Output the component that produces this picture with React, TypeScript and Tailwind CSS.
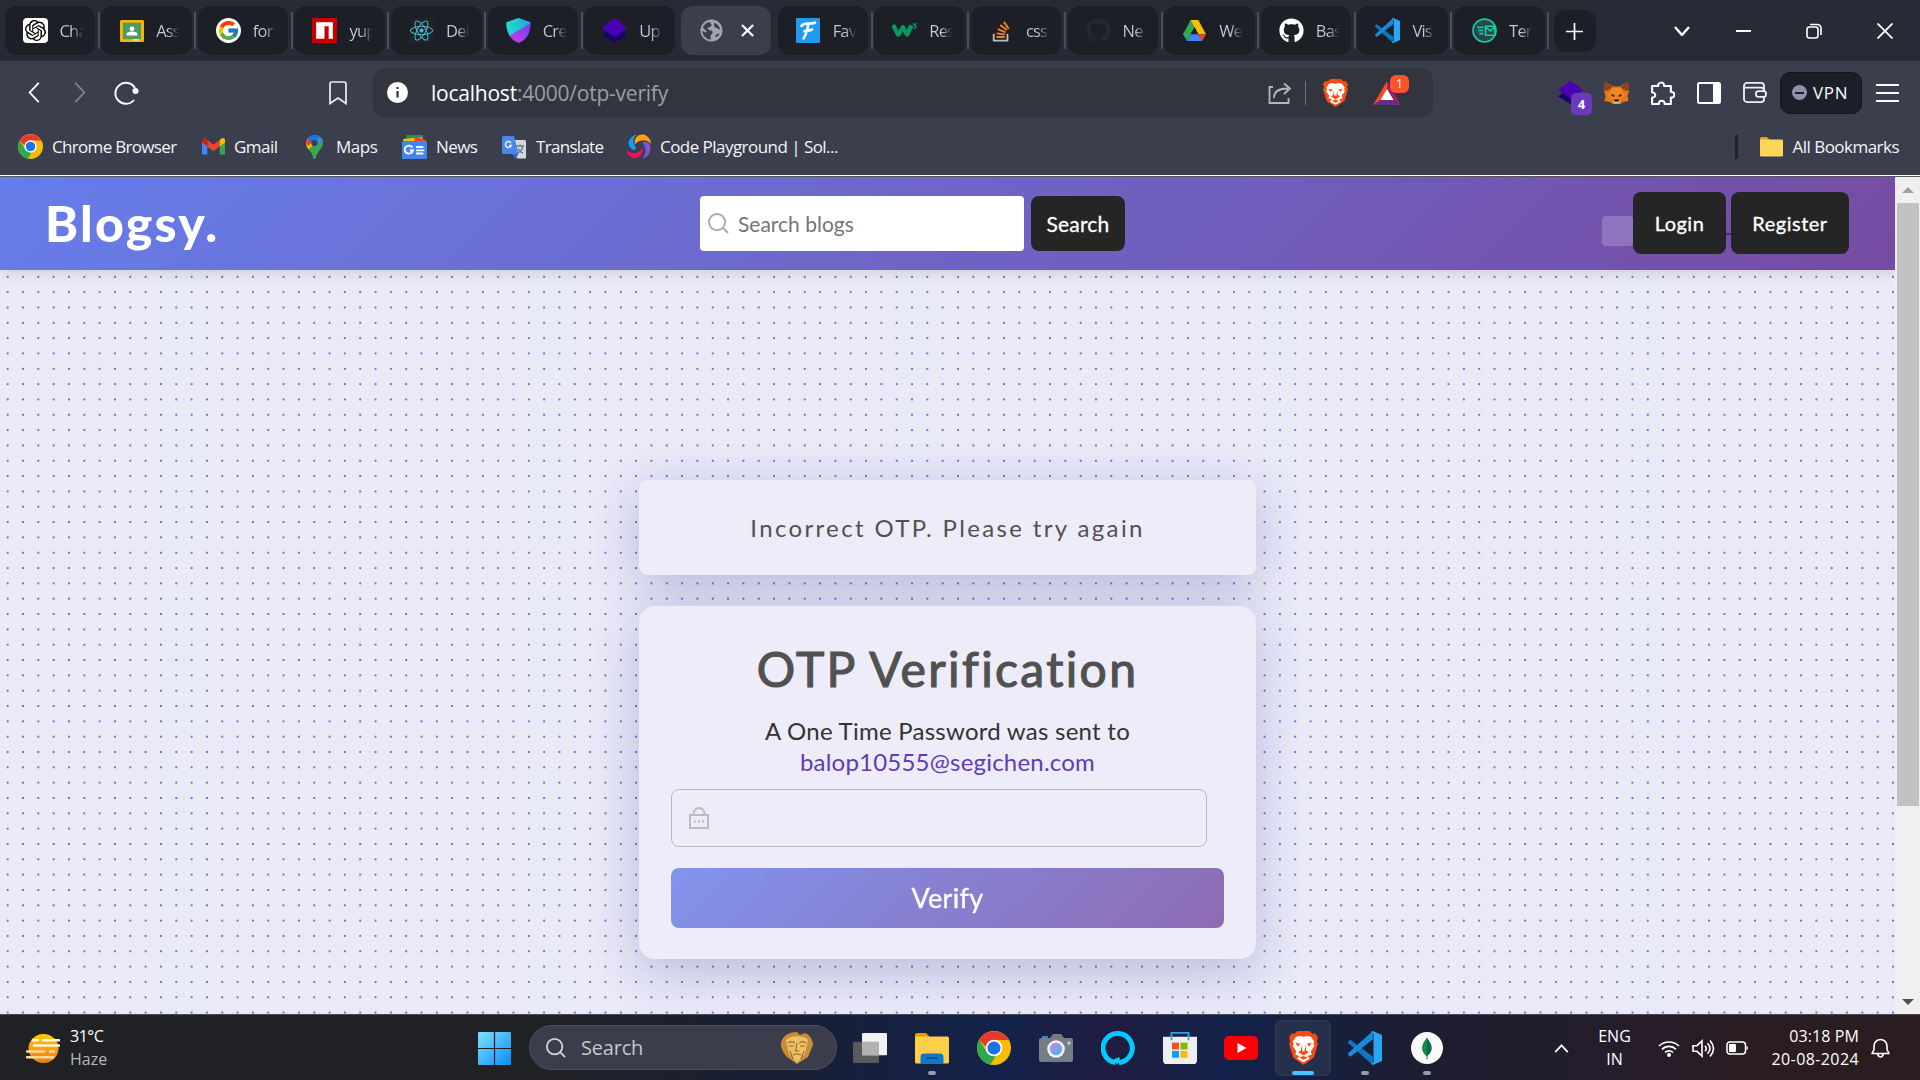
import React from "react";
import { FaReact, FaGithub, FaStackOverflow } from "react-icons/fa";
import { SiOpenai } from "react-icons/si";
import { FcGoogle } from "react-icons/fc";

type IconProps = { className?: string };

const svg = (viewBox: string, body: React.ReactNode) =>
  function Icon({ className = "h-6 w-6" }: IconProps) {
    return (
      <svg viewBox={viewBox} className={className} fill="none" preserveAspectRatio="none" aria-hidden="true">
        {body}
      </svg>
    );
  };

const Classroom = svg("0 0 24 24", <>
  <rect width="24" height="24" rx="1.5" fill="#f4b400" />
  <rect x="3" y="3" width="18" height="18" fill="#4a9c64" />
  <circle cx="12" cy="9.5" r="2.4" fill="#fff" />
  <path d="M6.500 17v-1.500c0-2 3-3 5.500-3s5.500 1 5.500 3V17z" fill="#fff" />
  <path d="M13 21h6v1.500h-6z" fill="#f1f1f1" />
</>);
const Npm = svg("0 0 24 24", <>
  <rect width="24" height="24" fill="#c60000" />
  <path d="M4 4h16v16h-4V8h-4v12H4z" fill="#fff" />
</>);
const Shield = svg("0 0 24 24", <>
  <defs>
    <linearGradient id="shB" x1="1" y1="0" x2="0" y2="1"><stop stopColor="#5b3ff0" /><stop offset="1" stopColor="#e03bea" /></linearGradient>
    <linearGradient id="shC" x1="0" y1="0" x2="1" y2="0"><stop stopColor="#20e0c8" /><stop offset="1" stopColor="#1fa5dd" /></linearGradient>
  </defs>
  <path d="M12 0l11.500 4c.5 7-1.500 16-11.500 20C2 20 0 11 .5 4z" fill="url(#shB)" />
  <path d="M12 0l11.500 4v1L3.500 17C1 13 .2 8 .5 4z" fill="url(#shC)" />
</>);
const Layers = svg("0 0 24 24", <>
  <path d="M12 8l12 8-12 8-12-8z" fill="#1b0068" />
  <path d="M12 0l12 9.200-12 9.200L0 9.200z" fill="#4a00b4" />
</>);
const Globe = svg("0 0 24 24", <>
  <circle cx="12" cy="12" r="11.500" fill="#a0a5b0" />
  <path d="M3 9c1-3 4-6 8-6-1 2 2 2 1 4s-4 1-4 3 4 1 5 3-2 3-2 5 1 3 0 3.500C6 21 2.500 17 2.500 12.500l4 1.500c1-1 0-2-1-2.500zM15 4c3 1 5.500 4 6 7-2 0-3-2-4.500-2S14 6 15 4zM16 19c0-3 2-4 4.500-3.500-1 2-2.500 3.300-4.500 3.500z" fill="#3b3e4d" />
</>);
const Fav = svg("0 0 24 24", <>
  <rect width="24" height="24" rx="1" fill="#1e9bf0" />
  <path d="M5.500 7.500C9 3.500 13 6.500 19 4.500M12.500 6C11 11 10.500 16 7.500 19.500M8.500 12.500c3 0 5-.3 7.500-1.500" stroke="#fff" strokeWidth="2.600" strokeLinecap="round" />
</>);
const W3 = svg("0 0 24 24", <>
  <path d="M1 5.500l5 11.500 4.500-9 4 9 4-11" stroke="#049b62" strokeWidth="4.200" strokeLinejoin="round" />
  <path d="M20 4.500h3l-1.500 2c2.500.3 2 3.300-.5 3-.6 0-1-.3-1.300-.7" stroke="#049b62" strokeWidth="1.200" />
</>);
const Drive = svg("0 0 24 22", <>
  <path d="M8 0h8l-4 7.500L4 22 0 15z" fill="#34a853" />
  <path d="M8 0h8l-4 7z" fill="#188038" />
  <path d="M8 0h8l8 15h-8z" fill="#fbbc04" />
  <path d="M24 15l-4 7-4-7z" fill="#ea4335" />
  <path d="M4 22l4-7h8l4 7z" fill="#4285f4" />
  <path d="M8.500 14h7L12 7.500z" fill="#1d1f27" />
</>);
const VsCode = svg("0 0 24 24", <>
  <path d="M0 7.300l1.700-1.200L17.500 18v6L.3 8.700z" fill="#0a78c4" />
  <path d="M0 16.700l1.700 1.500L17.500 6V0L.3 15.500z" fill="#1a8ad6" />
  <path d="M17.500 0L24 2.800v18.400L17.500 24l-1.300-.7L18 22V2L16.200.7z" fill="#2aa5f3" />
</>);
const TempMail = svg("0 0 24 24", <>
  <circle cx="12" cy="12" r="11" fill="#2d4550" stroke="#14cf9f" strokeWidth="1.600" />
  <path d="M5 9h6M6 12h5M7 15h4M13 8h9v8.500h-9zM13 8.500l4.500 4 4.500-4" stroke="#14cf9f" strokeWidth="1.500" />
</>);
const Brave = svg("0 0 28 32", <>
  <path d="M8 0h12l2.500 2.700 3-.3L28 6l-1.200 3.500L28 12l-4 13-10 7L4 25 0 12l1.200-2.500L0 6l2.500-3.600 3 .3z" fill="#fb4a13" />
  <path d="M14 5.500l4-.8 3.500 1 3 4.300-1 1.500 1 2.500-3.500 5 1 3-4 1.500L20 26l-6 3.500L8 26l2-2.500L6 22l1-3-3.500-5 1-2.500-1-1.500 3-4.300 3.500-1z" fill="#fff" />
  <path d="M6 11l5 1-2.500 2.500zM22 11l-5 1 2.500 2.500zM12 13l-.5 5-2.500 2 5 3 5-3-2.500-2-.5-5-1 6h-2zM10 25l4-1.500 4 1.500-4 2z" fill="#fb4a13" />
</>);
const Bat = svg("0 0 28 24", <>
  <path d="M14 0v9L8 19l-8 5z" fill="#ff4724" />
  <path d="M14 0l14 24-8-5-6-10z" fill="#9e1f63" />
  <path d="M0 24l8-5h12l8 5z" fill="#662d91" />
  <path d="M14 8l6.500 11h-13z" fill="#fff" />
</>);
const Fox = svg("0 0 24 22", <>
  <path d="M1 0l8.500 4.500h5L23 0l1 9-1.500 5 1 5-5 1-3 2h-7l-3-2-5-1 1-5L0 9z" fill="#e4761b" />
  <path d="M1 0l7.500 4.500L5 8 1 9 0 7zM23 0l-7.500 4.500L19 8l4 1 1-2z" fill="#8a4420" />
  <path d="M8 6h8l4 8-4 3H8l-4-3z" fill="#f6851b" />
  <path d="M7 12l3 1v2l-3-1zM17 12l-3 1v2l3-1z" fill="#33312f" />
  <path d="M8.500 18h7l-1 3.500h-5z" fill="#d7c1b3" /><path d="M10 17.500h4l.5 2h-5z" fill="#161616" />
</>);
const Puzzle = svg("0 0 24 24", <path d="M2 5h6c-1.300-4 6-5 5.500 0H20v6c4.500-1 4.500 6.500 0 5.500V23h-6c.5-4.500-6-4.500-5.500 0H2v-6.500c4 .5 4-5.500 0-5z" stroke="#fff" strokeWidth="2" strokeLinejoin="round" />);
const Wallet = svg("0 0 24 22", <>
  <rect x="1" y="1" width="20" height="20" rx="3" stroke="#f1f1f4" strokeWidth="1.800" />
  <path d="M2 6h16q3 0 3 3" stroke="#f1f1f4" strokeWidth="1.800" />
  <rect x="13" y="9.500" width="10" height="6" rx="2.500" fill="#3b3e4d" stroke="#f1f1f4" strokeWidth="1.800" />
</>);
const Share = svg("0 0 24 24", <path d="M5 6H1.500v16h19v-5M6 17c0-7 5-9.500 14-9.500M16 2.500l6 5-6 5.500" stroke="#b6b8be" strokeWidth="1.800" />);
const Chrome = svg("0 0 24 24", <>
  <circle cx="12" cy="12" r="12" fill="#fbbc05" />
  <path d="M1.600 6L7 15l6 3-3.500 5.700A12 12 0 0 1 1.600 6z" fill="#2da94f" />
  <path d="M1.600 6A12 12 0 0 1 22.400 6.300H12L7 12z" fill="#e33b2e" />
  <circle cx="12" cy="12" r="5.900" fill="#fff" /><circle cx="12" cy="12" r="4.600" fill="#1a73e8" />
</>);
const Gmail = svg("0 0 24 18", <>
  <path d="M0 3v14.500h5.500V7z" fill="#4285f4" /><path d="M24 3v14.500h-5.500V7z" fill="#34a853" />
  <path d="M5.500 2l6.500 5 6.500-5v7L12 14 5.500 9z" fill="#ea4335" />
  <path d="M0 2.500C0 0 2.500-.5 4 .8L5.500 2v7L0 4.800z" fill="#c5221f" /><path d="M24 2.500C24 0 21.500-.5 20 .8L18.500 2v7L24 4.800z" fill="#fbbc04" />
</>);
const Maps = svg("0 0 16 24", <>
  <path d="M8 0a8 8 0 0 1 8 8c0 6-6 8-7 16H7C6 16 0 14 0 8a8 8 0 0 1 8-8z" fill="#34a853" />
  <path d="M1.500 3.500L8 8l-5.500 6.500C-1 10 0 6 1.500 3.500z" fill="#fbbc04" />
  <path d="M1.500 3.500L6 7l-4 4C-.5 8 0 5.500 1.500 3.500z" fill="#ea4335" />
  <path d="M1.700 3.300A8 8 0 0 1 13 1.800L6 9z" fill="#1a73e8" />
  <path d="M13 1.800c1.500 1.200 2.500 2.700 2.900 4.500L9 11z" fill="#4285f4" />
  <circle cx="8" cy="8" r="3" fill="#3b3e4d" />
</>);
const News = svg("0 0 24 24", <>
  <path d="M4 0h16v8H4z" fill="#0c9d58" /><path d="M1 4l18-2 3 6H1z" fill="#fbbc04" /><path d="M12 1l11 4v3H12z" fill="#ea4335" />
  <rect y="6" width="24" height="18" rx="1.500" fill="#4285f4" />
  <path d="M10 12.500A4 4 0 1 0 10.500 15.500H7.500M13.500 12h7M13.500 15.300h8M13.500 18.500h7" stroke="#fff" strokeWidth="1.800" />
</>);
const Translate = svg("0 0 24 24", <>
  <path d="M10 5h12.500q1.500 0 1.500 1.500V22q0 1.500-1.500 1.500H15z" fill="#d5d8dc" />
  <path d="M14 11h8M18 9.500V11M21 11c-1 4-3 6-5.500 7M16 13.500c1 2.500 3 4 5 4.500" stroke="#607d8b" strokeWidth="1.300" />
  <path d="M1.500 1H12l4.500 18H2Q0 19 0 17.500v-15Q0 1 1.500 1z" fill="#4a86e8" /><path d="M10 19h6.500L13 24z" fill="#3367d6" />
  <path d="M9 8A3 3 0 1 0 9.300 10.500H7" stroke="#e8efff" strokeWidth="1.500" />
</>);
const Solo = svg("0 0 24 24", <>
  <path d="M8 15.500C2 14 0 6 7.500 1.500c1-.6 2-.9 3-1C6 4 6 9 10 13z" fill="#149df2" />
  <path d="M8.500 10C7 3 14-2 20 2c2.500 2 4 4.500 4 7.500C20 4.500 13 5 8.500 10z" fill="#ffa20e" />
  <path d="M15.500 8c6-2.500 9.500 3 7.500 9-1.200 3.500-4 6-7.500 7C20 19 19.500 12 15.500 8z" fill="#8053dd" />
  <path d="M16 13c1 8-6 13-12 8.500-2-1.500-3-3.500-3.500-5.500C6 19.500 13 19.500 16 13z" fill="#f70f5b" />
</>);
const Folder = svg("0 0 24 24", <>
  <path d="M0 2Q0 0 2 0h5l3 3v3H0z" fill="#e0a31e" /><rect y="3" width="24" height="20.500" rx="1.500" fill="#fdd65b" />
</>);
const Haze = svg("0 0 34 30", <>
  <defs><linearGradient id="hz" x1="0" y1="0" x2="0" y2="1"><stop stopColor="#ffc90a" /><stop offset="1" stopColor="#f47a10" /></linearGradient></defs>
  <circle cx="17.500" cy="15" r="15" fill="url(#hz)" />
  <path d="M7 6.500h5M17 6.500h16M8 12h25" stroke="#fff6e0" strokeWidth="2.600" strokeLinecap="round" />
  <path d="M1 18h17M24 18h4M1 24h26" stroke="#ffdba0" strokeWidth="2.600" strokeLinecap="round" />
</>);
const Windows = svg("0 0 32 32", <>
  <defs><linearGradient id="wn" x1="0" y1="0" x2="1" y2="1"><stop stopColor="#7fe0ff" /><stop offset="1" stopColor="#0a8df5" /></linearGradient></defs>
  <path d="M0 1q0-1 1-1h14.400v15.400H0zM16.600 0H31q1 0 1 1v14.400H16.600zM0 16.600h15.400V32H1q-1 0-1-1zM16.600 16.600H32V31q0 1-1 1H16.600z" fill="url(#wn)" />
</>);
const Mask = svg("0 0 34 32", <>
  <path d="M2 8C4 3 10 0 17 0l3 3 5-2c5 2 8 7 8 12l-5 12-11 7-10-7C3 20-1 14 2 8z" fill="#c98d35" />
  <path d="M6 8c4-5 18-5 22 0l-3 14-8 9-8-9z" fill="#ecc06a" />
  <path d="M8 11c3-2 5-2 7 0M19 11c3-2 5-2 7 0M9 14h5M20 14h5M17 11l-1.500 8h3.500M13 23c3-1.500 5-1.500 8 0M10 19l3 8M24 19l-3 8" stroke="#9a6824" strokeWidth="1.100" />
</>);
const TaskView = svg("0 0 34 32", <>
  <rect y="9" width="26" height="22" rx="1" fill="#5a5a5a" /><rect x="9" width="25" height="23" rx="1" fill="#f1f1f1" /><rect x="9" y="9" width="17" height="14" fill="#b2b2b2" />
</>);
const Explorer = svg("0 0 34 31", <>
  <path d="M0 2Q0 0 2 0h9l3 3v5H0z" fill="#e0a000" /><rect y="3.500" width="34" height="27" rx="1.500" fill="#fecf47" />
  <path d="M5.500 31v-7q0-3.500 3.500-3.500h16q3.500 0 3.500 3.500v7z" fill="#0f78c8" /><path d="M11 25h12" stroke="#0b4e8a" strokeWidth="1.500" />
</>);
const Camera = svg("0 0 34 28", <>
  <defs><linearGradient id="cm" x1="0" y1="0" x2="1" y2="1"><stop stopColor="#c58be8" /><stop offset="1" stopColor="#41b6ee" /></linearGradient></defs>
  <rect x="3" y="2" width="6" height="4" fill="#2b8bbd" /><path d="M2 4h9l3-4h8l3 4h7q2 0 2 2v20q0 2-2 2H2q-2 0-2-2V6q0-2 2-2z" fill="#757d86" />
  <circle cx="17" cy="15" r="8.800" fill="#f0f2f5" /><circle cx="17" cy="15" r="6.200" fill="url(#cm)" /><path d="M28 9h4M30 7v4" stroke="#d8dde2" strokeWidth="1" />
</>);
const Alexa = svg("0 0 34 34", <path d="M14.500 31.500A14.600 14.600 0 1 1 18 31.600M14.500 31.500Q17 30 16 27" stroke="#00caff" strokeWidth="5" />);
const Store = svg("0 0 34 34", <>
  <path d="M8.500 8V1h17v7" stroke="#2ba3e0" strokeWidth="1.800" />
  <path d="M0 5h34v24q0 4-4 4H4q-4 0-4-4z" fill="#eeeeee" />
  <path d="M9 11h7v7H9z" fill="#f25022" /><path d="M17.500 11h7v7h-7z" fill="#7fba00" /><path d="M9 19.500h7v7H9z" fill="#00a4ef" /><path d="M17.500 19.500h7v7h-7z" fill="#ffb900" />
  <path d="M8.500 5v3.500M25.500 5v3.500" stroke="#2ba3e0" strokeWidth="1.800" />
</>);
const YouTube = svg("0 0 34 24", <><rect width="34" height="24" rx="5" fill="#fe0000" /><path d="M13.500 7l9 5-9 5z" fill="#fff" /></>);
const Mongo = svg("0 0 34 34", <>
  <circle cx="17" cy="17" r="17" fill="#fafafa" /><path d="M17 6c3 4 5 7 5 11s-2 6-4.500 8.500V29h-1v-3.500C14 23 12 21 12 17s2-7 5-11z" fill="#0b6b4a" /><path d="M17 6c-3 4-5 7-5 11s2 6 4.500 8.500z" fill="#118d4d" />
</>);
const Wifi = svg("0 0 22 17", <>
  <path d="M1 6a14.500 14.500 0 0 1 20 0M4 9.300a10 10 0 0 1 14 0M7 12.500a5.800 5.800 0 0 1 8 0" stroke="#fff" strokeWidth="1.700" /><circle cx="11" cy="15" r="2" fill="#fff" />
</>);
const Volume = svg("0 0 23 20", <path d="M1 7v6h4l5 5V2L5 7zM13 7q2.500 3 0 6M15.500 4.500q5 5.500 0 11M18 1.500q7 8.500 0 17" stroke="#fff" strokeWidth="1.600" />);
const Battery = svg("0 0 23 14", <>
  <rect x="1" y="1" width="18.500" height="12" rx="3" stroke="#fff" strokeWidth="1.500" /><rect x="3" y="3" width="7" height="8" rx="1" fill="#fff" /><path d="M20.500 4.500q3 2.500 0 5z" fill="#fff" />
</>);
const Bell = svg("0 0 19 20", <path d="M1 15.500h17l-2-4V8a6.500 6.500 0 0 0-13 0v3.500zM6.500 16q1 3 3 3t3-3" stroke="#fff" strokeWidth="1.600" strokeLinejoin="round" />);
const Search = svg("0 0 22 22", <path d="M9.500 1a8.500 8.500 0 1 0 0 17 8.500 8.500 0 0 0 0-17zM15.500 15.500L21 21" stroke="currentColor" strokeWidth="2" />);
const Lock = svg("0 0 20 22", <><path d="M1 8h18v13H1zM4.500 8V6.500a5.500 5.500 0 0 1 11 0V8" stroke="#bdbcbc" strokeWidth="2" /><path d="M5 14.500h2M9 14.500h2M13 14.500h2" stroke="#bdbcbc" strokeWidth="2" /></>);

const tabs: { icon: React.ReactNode; label: string; active?: boolean; sep?: boolean }[] = [
  { icon: <span className="grid h-[25px] w-[25px] place-items-center rounded-[4px] bg-white"><SiOpenai className="h-[21px] w-[21px] text-black" /></span>, label: "Cha", sep: true },
  { icon: <Classroom className="h-[22px] w-6" />, label: "Ass", sep: true },
  { icon: <span className="grid h-[25px] w-[25px] place-items-center rounded-full bg-white"><FcGoogle className="h-[23px] w-[23px]" /></span>, label: "for", sep: true },
  { icon: <Npm className="h-[25px] w-[25px]" />, label: "yup", sep: true },
  { icon: <span className="grid h-[25px] w-[25px] place-items-center bg-[#20232a]"><FaReact className="h-[23px] w-[23px] text-[#53b9d1]" /></span>, label: "Del", sep: true },
  { icon: <Shield className="h-[25px] w-[25px]" />, label: "Cre", sep: true },
  { icon: <Layers className="h-[25px] w-[25px]" />, label: "Up" },
  { icon: <Globe className="h-[23px] w-[23px]" />, label: "", active: true },
  { icon: <Fav className="h-[25px] w-6" />, label: "Fav", sep: true },
  { icon: <W3 className="h-[21px] w-[25px]" />, label: "Res", sep: true },
  { icon: <svg viewBox="0 0 20 24" className="h-[22px] w-[19px]" fill="none"><path d="M1.500 15v7.500h15V15" stroke="#bcbbbb" strokeWidth="2" /><path d="M4.500 18.500h9M4.700 14.500l9 1.500M6 10l8.500 3.500M8.500 5.500l7.500 5.500M12.500 2l5.500 7.500" stroke="#f48024" strokeWidth="2" /></svg>, label: "css", sep: true },
  { icon: <FaGithub className="h-[25px] w-[25px] text-[#24292f]" />, label: "Ne", sep: true },
  { icon: <Drive className="h-[21px] w-[23px]" />, label: "We", sep: true },
  { icon: <FaGithub className="h-[25px] w-[25px] text-white" />, label: "Bas", sep: true },
  { icon: <VsCode className="h-[25px] w-[25px]" />, label: "Vis", sep: true },
  { icon: <TempMail className="h-[25px] w-[25px]" />, label: "Ter", sep: true },
];

function TabStrip() {
  return (
    <div className="flex h-[61px] items-start bg-[#282a36] pl-[4.5px] pt-[6px]">
      {tabs.map((t, i) => (
        <div key={i} className="flex w-[96.65px] shrink-0 items-center">
          <div className={t.active ? "flex h-[49px] w-[90.500px] items-center rounded-[12px] bg-[#3b3e4d] pl-[18px]" : "flex h-[49px] w-[90.500px] items-center rounded-[12px] bg-[#1d1f27] pl-[18px]"}>
            <span className="grid h-[25px] w-[25px] shrink-0 place-items-center">{t.icon}</span>
            {t.active ? (
              <svg viewBox="0 0 14 14" className="ml-[17px] h-[13px] w-[13px]"><path d="M1 1l12 12M13 1L1 13" stroke="#fff" strokeWidth="2.400" /></svg>
            ) : (
              <span className="ml-[12px] w-[24px] overflow-hidden whitespace-nowrap bg-linear-to-r from-[#c9cacd] from-50% to-[#1d1f27] bg-clip-text text-[16.500px] leading-[24px] tracking-[-0.8px] text-transparent">{t.label}</span>
            )}
          </div>
          {t.sep && <span className="ml-[2.500px] h-[37px] w-[2px] bg-[#4b4d57]" />}
        </div>
      ))}
      <div className="ml-[3px] mt-[4px] grid h-[42px] w-[42px] place-items-center rounded-[12px] bg-[#1d1f27]">
        <svg viewBox="0 0 18 18" className="h-[17px] w-[17px]"><path d="M9 0v18M0 9h18" stroke="#fff" strokeWidth="1.800" /></svg>
      </div>
      <div className="ml-auto flex h-[49px] items-center pr-[27px]">
        <svg viewBox="0 0 16 10" className="h-[10px] w-[16px]"><path d="M1 1l7 8 7-8" stroke="#fff" strokeWidth="2.400" fill="none" /></svg>
        <span className="ml-[46px] h-[2px] w-[15px] bg-white" />
        <svg viewBox="0 0 16 16" className="ml-[55px] h-[16px] w-[16px]"><rect x="1" y="4" width="11" height="11" rx="2.500" stroke="#fff" strokeWidth="1.600" fill="none" /><path d="M4 1.500h7q4 0 4 4V12" stroke="#fff" strokeWidth="1.600" fill="none" /></svg>
        <svg viewBox="0 0 16 16" className="ml-[55px] h-[16px] w-[16px]"><path d="M.5.5l15 15M15.500.5l-15 15" stroke="#fff" strokeWidth="1.800" /></svg>
      </div>
    </div>
  );
}

function Toolbar() {
  return (
    <div className="flex h-[63px] items-center bg-[#3b3e4d] pl-[28px] pr-[21px]">
      <svg viewBox="0 0 12 22" className="h-[21px] w-[12px]"><path d="M11 1L1.500 11 11 21" stroke="#fff" strokeWidth="1.900" fill="none" /></svg>
      <svg viewBox="0 0 12 22" className="ml-[34px] h-[21px] w-[12px]"><path d="M1 1l9.500 10L1 21" stroke="#80838d" strokeWidth="1.900" fill="none" /></svg>
      <svg viewBox="0 0 25 24" className="ml-[28px] h-[24px] w-[25px]"><path d="M20 19A10.500 10.500 0 1 1 21 7" stroke="#fff" strokeWidth="1.900" fill="none" /><circle cx="21.500" cy="10" r="3" fill="#fff" /></svg>
      <svg viewBox="0 0 18 24" className="ml-[190px] h-[24px] w-[18px]"><path d="M1 3q0-2 2-2h12q2 0 2 2v19.500L9 17l-8 5.500z" stroke="#eee" strokeWidth="1.700" fill="none" /></svg>
      <div className="ml-[26px] flex h-[49px] w-[1060px] shrink-0 items-center rounded-[12px] bg-[#32353e] pl-[14px] pr-[32px]">
        <svg viewBox="0 0 21 21" className="h-[21px] w-[21px]"><circle cx="10.500" cy="10.500" r="10.500" fill="#fff" /><path d="M10.500 9v6.500M10.500 5v2" stroke="#32353e" strokeWidth="2.200" /></svg>
        <span className="ml-[23px] whitespace-nowrap text-[21px] leading-[28px] tracking-[-0.23px] text-[#9b9da3]"><span className="text-white">localhost</span>:4000/otp-verify</span>
        <Share className="ml-auto h-[24px] w-[24px]" />
        <span className="ml-[13px] h-[24px] w-px bg-[#6e7079]" />
        <Brave className="ml-[17px] h-[28px] w-[25px]" />
        <span className="relative ml-[25px]"><Bat className="h-[24px] w-[28px]" />
          <span className="absolute -top-[6px] left-[17px] grid h-[18px] w-[19px] place-items-center rounded-[6px] bg-[#fb542b] text-[12px] leading-none text-white">1</span>
        </span>
      </div>
      <span className="relative ml-auto"><Layers className="h-[23px] w-[25px]" />
        <span className="absolute left-[13px] top-[12px] grid h-[22px] w-[21px] place-items-center rounded-[5px] bg-[#6b38c0] text-[13px] font-bold leading-none text-white">4</span>
      </span>
      <Fox className="ml-[21px] h-[22px] w-[25px]" />
      <Puzzle className="ml-[21px] h-[24px] w-[25px]" />
      <svg viewBox="0 0 24 22" className="ml-[22px] h-[22px] w-[24px]"><rect x="1" y="1" width="22" height="20" rx="1.500" stroke="#fff" strokeWidth="2" fill="none" /><path d="M16 1h7v20h-7z" fill="#fff" /></svg>
      <Wallet className="ml-[22px] h-[21px] w-[24px]" />
      <div className="ml-[13px] flex h-[42px] w-[82px] items-center rounded-[10px] border border-[#13151c] bg-[#1c1e28] pl-[11px]">
        <span className="grid h-[15px] w-[15px] place-items-center rounded-full bg-[#8f92a8]"><span className="h-[2px] w-[9px] bg-[#1c1e28]" /></span>
        <span className="ml-[6px] text-[17px] leading-[22px] tracking-[0.7px] text-white">VPN</span>
      </div>
      <div className="ml-[14px] flex w-[23px] flex-col gap-[6px]"><span className="h-[2px] bg-white" /><span className="h-[2px] bg-white" /><span className="h-[2px] bg-white" /></div>
    </div>
  );
}

function Bookmarks() {
  return (
    <div className="flex h-[51px] items-center whitespace-nowrap bg-[#3b3e4d] pb-[6px] pl-[18px] text-[17px] leading-[24px] text-[#f4f4f6]">
      <div className="flex w-[184px] items-center gap-[9px]"><Chrome className="h-[25px] w-[25px]" /><span className="tracking-[-0.68px]">Chrome Browser</span></div>
      <div className="flex w-[104px] items-center gap-[9px]"><Gmail className="h-[17px] w-[23px]" /><span className="tracking-[-0.5px]">Gmail</span></div>
      <div className="flex w-[96px] items-center gap-[13px]"><Maps className="h-[24px] w-[17px]" /><span className="tracking-[-0.5px]">Maps</span></div>
      <div className="flex w-[100px] items-center gap-[9px]"><News className="h-[24px] w-[25px]" /><span className="tracking-[-0.55px]">News</span></div>
      <div className="flex w-[124px] items-center gap-[10px]"><Translate className="h-[24px] w-[24px]" /><span className="tracking-[-0.7px]">Translate</span></div>
      <div className="flex items-center gap-[9px]"><Solo className="h-[25px] w-[25px]" /><span className="tracking-[-0.54px]">Code Playground | Sol...</span></div>
      <span className="ml-auto h-[24px] w-[3px] bg-[#1f2028]" />
      <Folder className="ml-[22px] h-[20px] w-[23px]" />
      <span className="ml-[10px] mr-[21px] tracking-[-0.53px]">All Bookmarks</span>
    </div>
  );
}

function SiteHeader() {
  return (
    <header className="flex h-[93px] shrink-0 items-center bg-[linear-gradient(135deg,#667eea_0%,#764ba2_100%)] pb-px pl-[45px] pr-[46px] shadow-[0_3px_12px_rgba(0,0,0,0.12)]">
      <h1 className="w-[655px] whitespace-nowrap text-[50px] font-black leading-[60px] tracking-[2.200px] text-white">Blogsy.</h1>
      <div className="mt-px flex h-[55px] w-[324px] items-center rounded-[4px] bg-white pl-[8px]">
        <Search className="h-[21px] w-[21px] text-[#ababab]" />
        <span className="ml-[9px] text-[21px] leading-[28px] text-[#757575]">Search blogs</span>
      </div>
      <button className="ml-[7px] mt-px grid h-[55px] w-[94px] place-items-center rounded-[8px] bg-[#252525] text-[21px] leading-[28px] tracking-[0.2px] text-white [-webkit-text-stroke:0.3px_white]">Search</button>
      <span className="ml-auto mt-[15px] h-[30px] w-[31px] rounded-[4px] bg-white/20" />
      <button className="grid h-[62px] w-[93px] place-items-center rounded-[8px] bg-[#252525] text-[20px] leading-[28px] tracking-[0.5px] text-white [-webkit-text-stroke:0.3px_white]">Login</button>
      <span className="mt-[21px] h-[2px] w-[5px] bg-[#551a8b]" />
      <button className="grid h-[62px] w-[118px] place-items-center rounded-[8px] bg-[#252525] text-[20px] leading-[28px] tracking-[0.5px] text-white [-webkit-text-stroke:0.3px_white]">Register</button>
    </header>
  );
}

function OtpPage() {
  return (
    <div className="flex min-w-0 flex-1 flex-col overflow-hidden bg-[#eae9f7] bg-[radial-gradient(circle_at_center,#6a6ae8_0.7px,transparent_1.300px)] bg-[length:15.34px_15.34px] bg-[position:0px_0.2px] font-['Lato',sans-serif]">
      <SiteHeader />
      <main className="flex flex-col items-center pt-[210px]">
        <div className="flex h-[95px] w-[617px] items-center justify-center rounded-[8px] bg-[#edecf8] shadow-[0_12px_49px_rgba(31,38,135,0.24)]">
          <span className="whitespace-nowrap text-[24px] leading-[30px] tracking-[2.350px] text-[#515151]">Incorrect OTP. Please try again</span>
        </div>
        <section className="mt-[31px] flex h-[353px] w-[617px] flex-col items-center rounded-[16px] bg-[#edecf8] px-[32px] shadow-[0_12px_49px_rgba(31,38,135,0.24)]">
          <h2 className="mt-[33px] whitespace-nowrap text-[48px] leading-[60px] tracking-[2.350px] text-[#515151] [-webkit-text-stroke:1.200px_#515151]">OTP Verification</h2>
          <p className="mt-[16px] flex flex-col items-center whitespace-nowrap text-[24px] leading-[31px] text-[#333]">
            <span className="tracking-[0.25px]">A One Time Password was sent to</span>
            <span className="tracking-[0.21px] text-[#5f3bb5]">balop10555@segichen.com</span>
          </p>
          <div className="mt-[12px] flex h-[58px] w-[536px] items-center self-start rounded-[8px] border border-[#b9b9bd] pl-[17px]">
            <Lock className="h-[22px] w-[20px]" />
          </div>
          <button className="mt-[21px] grid h-[60px] w-full place-items-center rounded-[8px] bg-[linear-gradient(135deg,#667eea_0%,#764ba2_100%)] text-[27px] leading-[34px] tracking-[0.3px] text-white opacity-80 [-webkit-text-stroke:0.4px_white]">Verify</button>
        </section>
      </main>
    </div>
  );
}

function Scrollbar() {
  return (
    <div className="flex w-[25px] shrink-0 flex-col items-center bg-[#f0f0f0]">
      <span className="grid h-[26px] place-items-center"><svg viewBox="0 0 12 6" className="h-[6px] w-[12px]"><path d="M0 6l6-6 6 6z" fill="#a0a0a0" /></svg></span>
      <span className="h-[603px] w-[22px] bg-[#c1c1c1]" />
      <span className="mb-[9px] mt-auto"><svg viewBox="0 0 12 6" className="h-[6px] w-[12px]"><path d="M0 0l6 6 6-6z" fill="#505050" /></svg></span>
    </div>
  );
}

const apps: { icon: React.ReactNode; mark?: "dot" | "active" }[] = [
  { icon: <TaskView className="h-[31px] w-[34px]" /> },
  { icon: <Explorer className="h-[31px] w-[34px]" />, mark: "dot" },
  { icon: <Chrome className="h-[34px] w-[34px]" /> },
  { icon: <Camera className="h-[28px] w-[34px]" /> },
  { icon: <Alexa className="h-[34px] w-[34px]" /> },
  { icon: <Store className="h-[33px] w-[34px]" /> },
  { icon: <YouTube className="h-[24px] w-[34px]" /> },
  { icon: <Brave className="h-[34px] w-[29px]" />, mark: "active" },
  { icon: <VsCode className="h-[34px] w-[34px]" />, mark: "dot" },
  { icon: <Mongo className="h-[32px] w-[32px]" />, mark: "dot" },
];

function Taskbar() {
  return (
    <div className="flex h-[66px] items-start border-t border-[#4a4a52] bg-[linear-gradient(90deg,#202124_0%,#202124_28%,#171f38_43%,#13224a_52%,#1f1c40_58%,#13224a_64%,#1c1d30_74%,#241d2b_84%,#2a1c21_92%,#2a1c21_100%)] text-white">
      <div className="flex h-[66px] w-[478px] items-center pl-[26px]">
        <Haze className="h-[29px] w-[34px]" />
        <div className="ml-[10px] flex flex-col text-[16px] leading-[23px]"><span className="tracking-[-0.5px]">31°C</span><span className="text-[#b6b6b8]">Haze</span></div>
      </div>
      <Windows className="mt-[17px] h-[33px] w-[33px]" />
      <div className="ml-[18px] mt-[10px] flex h-[45px] w-[308px] items-center rounded-full border border-[#4e5060] bg-[#3b3d4c] pl-[16px] pr-[22px]">
        <Search className="h-[20px] w-[20px] text-[#d5d5d8]" />
        <span className="ml-[15px] text-[20px] leading-[26px] tracking-[-0.2px] text-[#c5c6cb]">Search</span>
        <Mask className="ml-auto h-[32px] w-[34px]" />
      </div>
      <div className="ml-[2.500px] flex pt-[5px]">
        {apps.map((a, i) => (
          <div key={i} className="flex w-[61.850px] justify-center">
            <div className={a.mark === "active" ? "relative grid h-[56px] w-[56px] place-items-center rounded-[6px] border border-[#313b58] bg-[#27304b]" : "relative grid h-[56px] w-[56px] place-items-center"}>
              {a.icon}
              {a.mark === "dot" && <span className="absolute bottom-[1px] left-[24px] h-[4px] w-[8px] rounded-full bg-[#9a9aa8]" />}
              {a.mark === "active" && <span className="absolute bottom-0 left-[16px] h-[4px] w-[22px] rounded-full bg-[#4cc2ff]" />}
            </div>
          </div>
        ))}
      </div>
      <div className="ml-auto flex h-[66px] items-center pr-[30px]">
        <svg viewBox="0 0 16 10" className="h-[9px] w-[15px]"><path d="M1 9l7-7.500L15 9" stroke="#fff" strokeWidth="1.900" fill="none" /></svg>
        <div className="ml-[29px] flex w-[33px] flex-col items-center text-[16px] leading-[23px]"><span>ENG</span><span>IN</span></div>
        <Wifi className="ml-[27px] h-[17px] w-[22px]" />
        <Volume className="ml-[12px] h-[19px] w-[23px]" />
        <Battery className="ml-[11px] h-[14px] w-[23px]" />
        <div className="ml-[23px] flex w-[87px] flex-col items-end whitespace-nowrap text-[16px] leading-[23px]"><span className="tracking-[0.1px]">03:18 PM</span><span className="tracking-[0.4px]">20-08-2024</span></div>
        <Bell className="ml-[12px] h-[20px] w-[19px]" />
      </div>
    </div>
  );
}

export default function App() {
  return (
    <div className="flex h-[1080px] w-[1920px] flex-col overflow-hidden font-['Open_Sans',sans-serif]">
      <TabStrip />
      <Toolbar />
      <Bookmarks />
      <div className="h-px bg-white" />
      <div className="h-px bg-[#55585a]" />
      <div className="flex min-h-0 flex-1">
        <OtpPage />
        <Scrollbar />
      </div>
      <Taskbar />
    </div>
  );
}
